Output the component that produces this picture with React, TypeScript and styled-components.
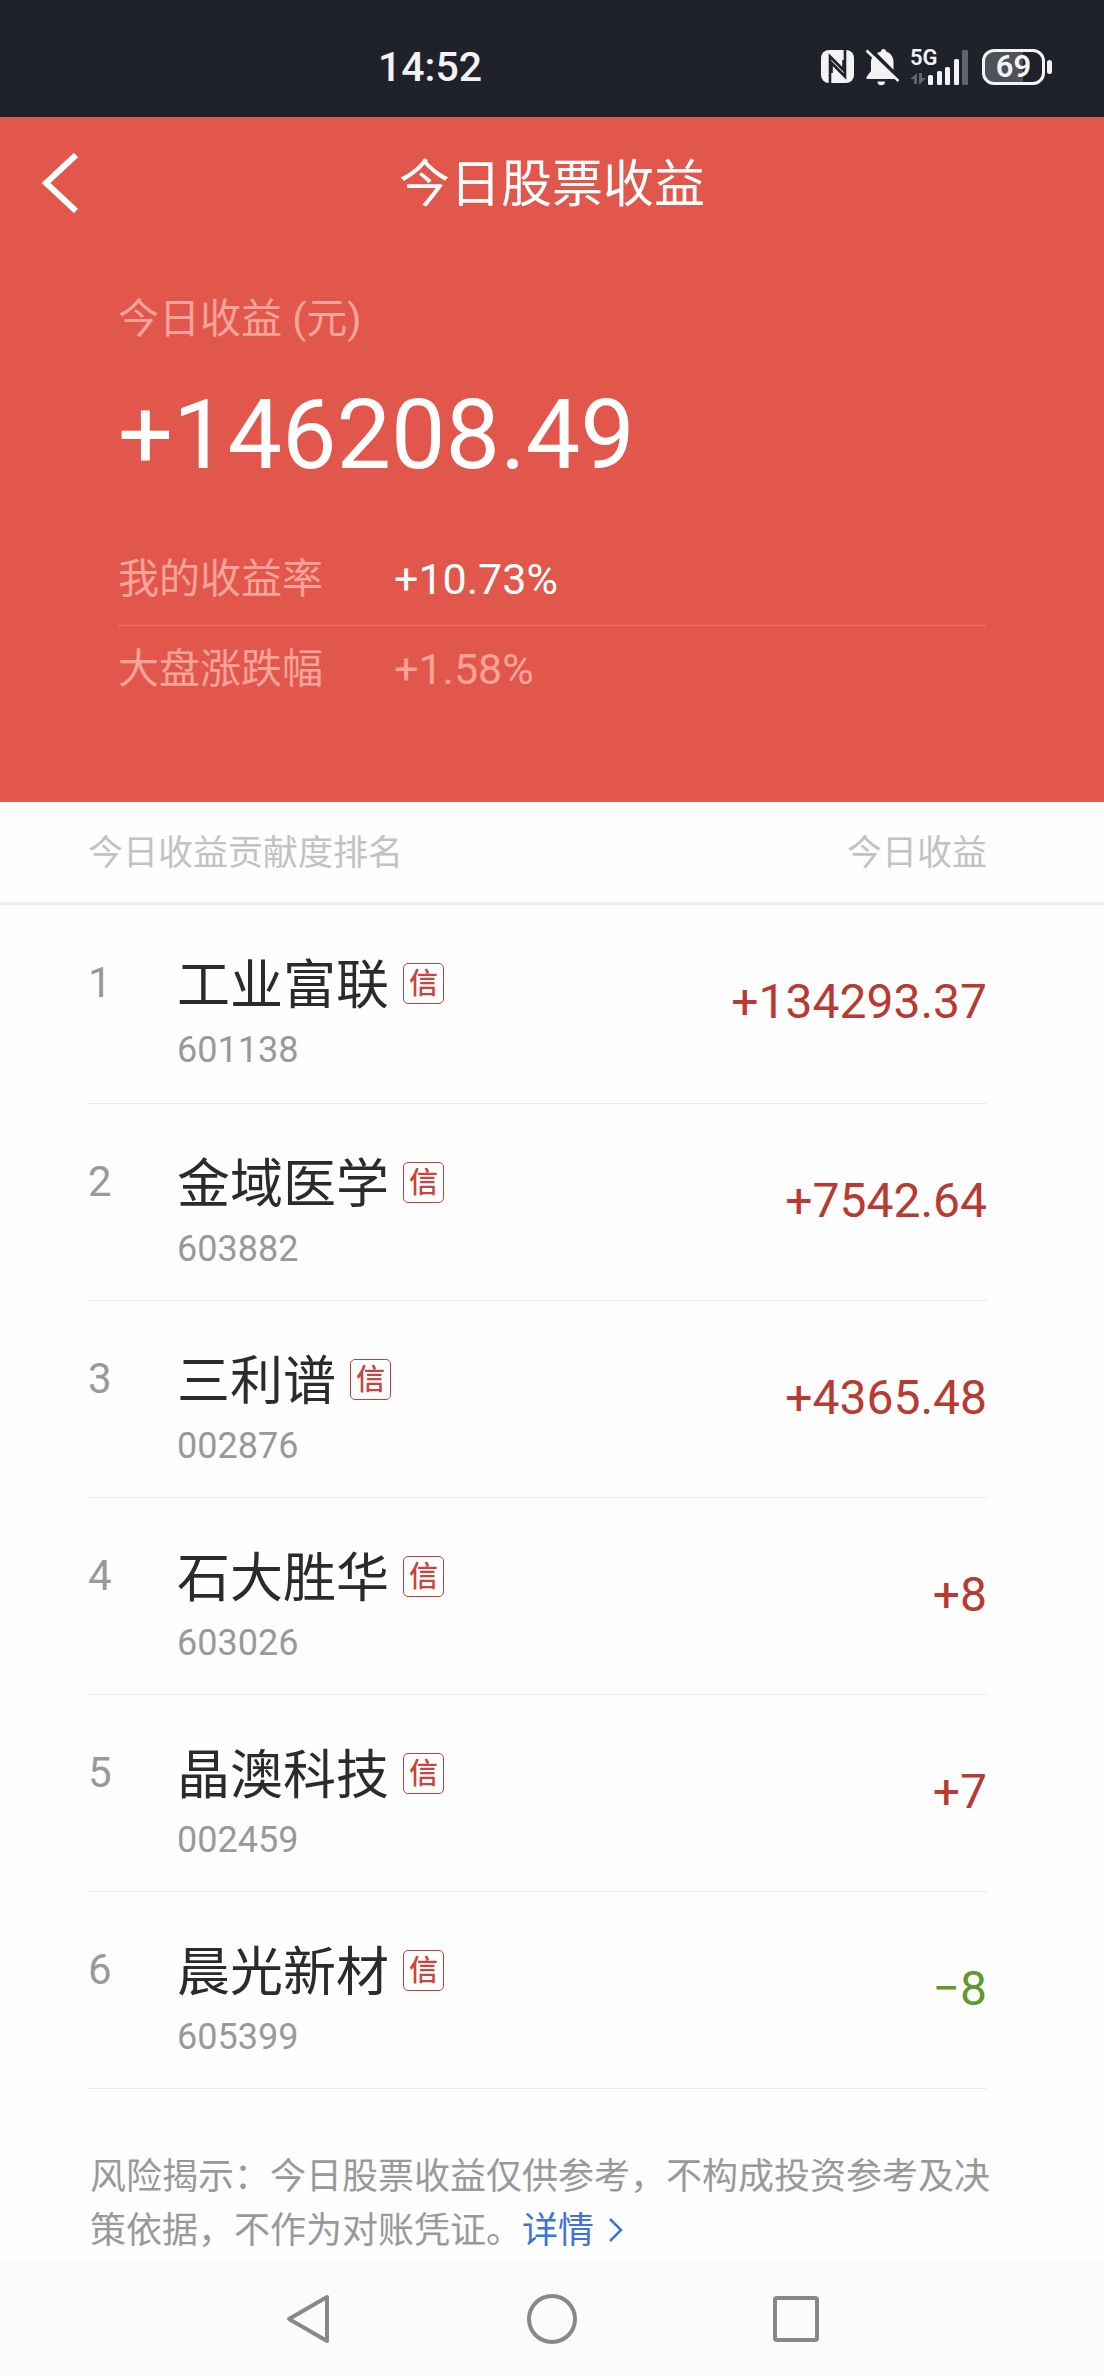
import React from "react";
import styled, { createGlobalStyle } from "styled-components";

const GlobalStyle = createGlobalStyle`
  * { box-sizing: border-box; }
  body {
    margin: 0;
    background: #fefefe;
    font-family: Roboto, "Noto Sans CJK SC", sans-serif;
  }
`;

const Screen = styled.div`
  display: flex;
  flex-direction: column;
  min-height: 100vh;
`;

const StatusBar = styled.div`
  display: flex;
  align-items: center;
  justify-content: space-between;
  height: 117px;
  padding: 16px 52px 0 378px;
  background: #1f222b;
  color: #f3f3f5;
`;

const Clock = styled.time`
  font-size: 41px;
  line-height: 48px;
  font-weight: 500;
`;

const StatusIcons = styled.div`
  display: flex;
  align-items: center;
`;

const NfcIcon = styled.svg`
  width: 33px;
  height: 33px;
`;

const BellIcon = styled.svg`
  width: 36px;
  height: 38px;
  margin-left: 11px;
`;

const Signal = styled.div`
  position: relative;
  width: 58px;
  height: 36px;
  margin-left: 9px;
`;

const Network = styled.span`
  position: absolute;
  left: 0;
  top: -1px;
  font-size: 22px;
  line-height: 20px;
  font-weight: 600;
`;

const Battery = styled.div`
  position: relative;
  display: flex;
  align-items: center;
  justify-content: center;
  width: 63px;
  height: 36px;
  margin: 0 7px 0 14px;
  border: 3px solid #f3f3f5;
  border-radius: 12px;
  background: linear-gradient(to right, #50525a 66%, transparent 66%);
  font-size: 31px;
  line-height: 30px;
  font-weight: 600;

  &::after {
    content: "";
    position: absolute;
    right: -10px;
    top: 8px;
    width: 5px;
    height: 14px;
    border-radius: 3px;
    background: #f3f3f5;
  }
`;

const Hero = styled.header`
  padding-bottom: 91px;
  background: #e2574c;
  color: #fff;
`;

const TitleBar = styled.div`
  display: grid;
  grid-template-columns: 118px 1fr 118px;
  align-items: center;
  height: 131px;
`;

const BackButton = styled.button`
  display: flex;
  align-items: center;
  height: 100%;
  padding: 0 0 0 40px;
  border: 0;
  background: none;
  color: inherit;
`;

const Title = styled.h1`
  margin: 0;
  padding-top: 4px;
  text-align: center;
  font-size: 51px;
  line-height: 60px;
  font-weight: 400;
`;

const Summary = styled.section`
  padding: 41px 118px 0;
`;

const SummaryLabel = styled.div`
  color: #f9a39b;
  font-size: 41px;
  line-height: 60px;
`;

const Total = styled.div`
  margin: 28px 0 40px;
  font-size: 97px;
  line-height: 116px;
`;

const Rate = styled.div<{ $muted?: boolean }>`
  display: flex;
  align-items: center;
  height: ${(p) => (p.$muted ? 85 : 93)}px;
  border-bottom: ${(p) => (p.$muted ? "0" : "1px solid #ec746b")};
  color: ${(p) => (p.$muted ? "#f9a39b" : "#fff")};
  font-size: 43px;
  line-height: 60px;
`;

const RateLabel = styled.span`
  width: 276px;
  color: #f9a39b;
  font-size: 41px;
`;

const Ranking = styled.table`
  display: block;
`;

const RankingHead = styled.thead`
  display: block;
  padding: 0 117px 0 88px;
  border-bottom: 3px solid #ededed;
`;

const HeadRow = styled.tr`
  display: flex;
  align-items: center;
  justify-content: space-between;
  height: 100px;
  padding-top: 3px;
`;

const HeadCell = styled.th`
  padding: 0;
  color: #c2c2c2;
  font-size: 35px;
  line-height: 44px;
  font-weight: 400;
`;

const RankingBody = styled.tbody`
  display: block;
  padding: 0 117px 0 88px;
`;

const StockRow = styled.tr`
  display: flex;
  height: 197px;
  border-bottom: 1px solid #ececec;

  &:first-child {
    height: 199px;
  }
`;

const Rank = styled.td`
  width: 89px;
  padding: 48px 0 0;
  color: #999;
  font-size: 42px;
  line-height: 60px;
`;

const Stock = styled.td`
  flex: 1;
  padding: 51px 0 0;
`;

const NameLine = styled.div`
  display: flex;
  align-items: center;
  gap: 14px;
  color: #2b2b2b;
  font-size: 53px;
  line-height: 60px;
`;

const CreditTag = styled.span`
  display: flex;
  align-items: center;
  justify-content: center;
  width: 41px;
  height: 41px;
  margin-bottom: 6px;
  padding-top: 2px;
  border: 1px solid #b9443e;
  border-radius: 5px;
  color: #c8453f;
  font-size: 29px;
  line-height: 36px;
  font-weight: 500;
`;

const Code = styled.div`
  margin-top: 12px;
  color: #999;
  font-size: 36px;
  line-height: 44px;
`;

const Amount = styled.td<{ $loss: boolean }>`
  padding: 67px 0 0;
  color: ${(p) => (p.$loss ? "#64982f" : "#b93a32")};
  font-size: 48px;
  line-height: 60px;
`;

const Notice = styled.p`
  margin: 0;
  padding: 61px 88px 3px 90px;
  color: #999;
  font-size: 36px;
  line-height: 54px;
`;

const DetailLink = styled.a`
  color: #3f72dc;
  text-decoration: none;

  svg {
    margin-left: 14px;
  }
`;

const SystemNav = styled.nav`
  display: flex;
  flex: 1;
  align-items: center;
  justify-content: center;
  gap: 144px;
  min-height: 115px;
  background: #fbfbfb;
`;

const NavButton = styled.button`
  display: flex;
  align-items: center;
  justify-content: center;
  width: 100px;
  height: 100px;
  padding: 0;
  border: 0;
  background: none;
  color: #888;
`;

const stocks = [
  { name: "工业富联", code: "601138", amount: "+134293.37" },
  { name: "金域医学", code: "603882", amount: "+7542.64" },
  { name: "三利谱", code: "002876", amount: "+4365.48" },
  { name: "石大胜华", code: "603026", amount: "+8" },
  { name: "晶澳科技", code: "002459", amount: "+7" },
  { name: "晨光新材", code: "605399", amount: "-8" },
];

export default function App() {
  return (
    <>
      <GlobalStyle />
      <Screen>
        <StatusBar>
          <Clock>14:52</Clock>
          <StatusIcons>
            <NfcIcon viewBox="0 0 33 33" aria-hidden="true">
              <rect width="33" height="33" rx="8" fill="#f3f3f5" />
              <path
                d="M9 33V6.500L22.500 20V10M24 0V26.500L10.500 13V23"
                fill="none"
                stroke="#1f222b"
                strokeWidth="2.600"
              />
            </NfcIcon>
            <BellIcon viewBox="0 0 36 38" aria-hidden="true">
              <path
                d="M16 3.500a2.500 2.500 0 0 1 5 0c5 1.500 7.500 5.500 7.500 10.500v9l4 6v2h-31v-2l4.500-6V14c0-5 4-9 10-10.500z"
                fill="#f3f3f5"
              />
              <path d="M12.500 33.500h7.500a3.700 3.700 0 0 1-7.500 0z" fill="#f3f3f5" />
              <path d="M4 0L36 32" stroke="#1f222b" strokeWidth="4" />
              <path d="M1.500 2.500L33.500 33" stroke="#f3f3f5" strokeWidth="2.500" />
            </BellIcon>
            <Signal>
              <Network>5G</Network>
              <svg width="58" height="36" viewBox="0 0 58 36" aria-hidden="true">
                <g fill="#f3f3f5">
                  <rect x="18" y="26" width="5" height="10" rx="1.500" />
                  <rect x="27" y="22" width="5" height="14" rx="1.500" />
                  <rect x="35" y="18" width="5" height="18" rx="1.500" />
                  <rect x="44" y="10" width="5" height="26" rx="1.500" />
                </g>
                <g fill="#63656c">
                  <rect x="52" y="1" width="6" height="35" rx="1.500" />
                  <path d="M7 24v11H4v-5H0zM9 24h3v5h4l-7 7z" />
                </g>
              </svg>
            </Signal>
            <Battery>69</Battery>
          </StatusIcons>
        </StatusBar>

        <Hero>
          <TitleBar>
            <BackButton aria-label="返回">
              <svg width="40" height="60" viewBox="0 0 40 60" aria-hidden="true">
                <path d="M36 2L6 30L36 58" fill="none" stroke="currentColor" strokeWidth="6" />
              </svg>
            </BackButton>
            <Title>今日股票收益</Title>
          </TitleBar>
          <Summary>
            <SummaryLabel>今日收益 (元)</SummaryLabel>
            <Total>+146208.49</Total>
            <Rate>
              <RateLabel>我的收益率</RateLabel>
              <span>+10.73%</span>
            </Rate>
            <Rate $muted>
              <RateLabel>大盘涨跌幅</RateLabel>
              <span>+1.58%</span>
            </Rate>
          </Summary>
        </Hero>

        <Ranking>
          <RankingHead>
            <HeadRow>
              <HeadCell>今日收益贡献度排名</HeadCell>
              <HeadCell>今日收益</HeadCell>
            </HeadRow>
          </RankingHead>
          <RankingBody>
            {stocks.map((stock, i) => (
              <StockRow key={stock.code}>
                <Rank>{i + 1}</Rank>
                <Stock>
                  <NameLine>
                    {stock.name}
                    <CreditTag>信</CreditTag>
                  </NameLine>
                  <Code>{stock.code}</Code>
                </Stock>
                <Amount $loss={stock.amount.startsWith("-")}>
                  {stock.amount.replace("-", "−")}
                </Amount>
              </StockRow>
            ))}
          </RankingBody>
        </Ranking>

        <Notice>
          风险揭示：今日股票收益仅供参考，不构成投资参考及决策依据，不作为对账凭证。
          <DetailLink href="#detail">
            详情
            <svg width="16" height="26" viewBox="0 0 16 26" aria-hidden="true">
              <path d="M2 2L13 13L2 24" fill="none" stroke="currentColor" strokeWidth="2.500" />
            </svg>
          </DetailLink>
        </Notice>

        <SystemNav>
          <NavButton aria-label="返回上一页">
            <svg width="44" height="52" viewBox="0 0 44 52" aria-hidden="true">
              <path
                d="M41 4V48L3 26Z"
                fill="none"
                stroke="currentColor"
                strokeWidth="4"
                strokeLinejoin="round"
              />
            </svg>
          </NavButton>
          <NavButton aria-label="主屏幕">
            <svg width="50" height="50" viewBox="0 0 50 50" aria-hidden="true">
              <circle cx="25" cy="25" r="23" fill="none" stroke="currentColor" strokeWidth="4" />
            </svg>
          </NavButton>
          <NavButton aria-label="最近任务">
            <svg width="46" height="46" viewBox="0 0 46 46" aria-hidden="true">
              <rect x="2" y="2" width="42" height="42" rx="2" fill="none" stroke="currentColor" strokeWidth="4" />
            </svg>
          </NavButton>
        </SystemNav>
      </Screen>
    </>
  );
}
